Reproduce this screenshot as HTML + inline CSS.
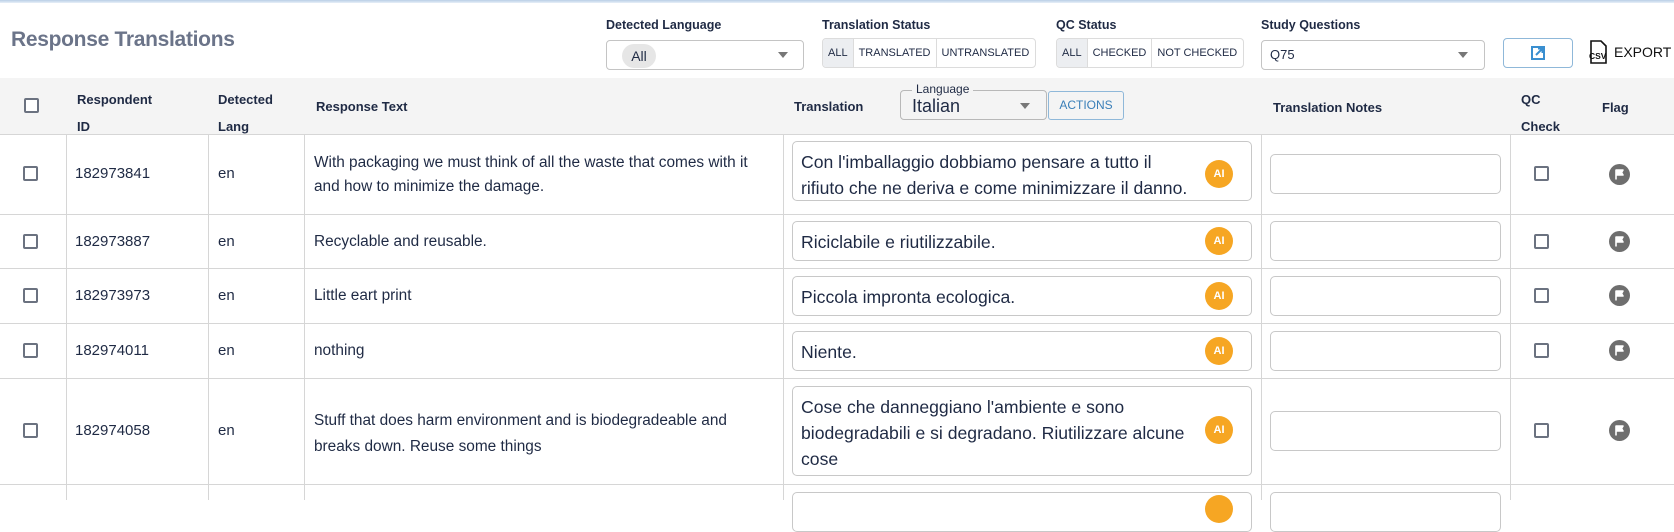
<!DOCTYPE html>
<html><head><meta charset="utf-8"><style>
*{box-sizing:border-box;margin:0;padding:0}
body{width:1674px;height:500px;overflow:hidden;background:#fff;font-family:"Liberation Sans",sans-serif;color:#1f2a44;position:relative}
.a{position:absolute}
.top{left:0;top:0;width:1674px;height:3px;background:linear-gradient(#b9cfe6,#e8f0f8)}
.title{left:11px;top:28px;font-size:21px;font-weight:bold;color:#6b7489;letter-spacing:-0.3px}
.lbl{font-size:12.5px;font-weight:bold;color:#1f2a44}
.sel{border:1px solid #c4c4c4;border-radius:4px;background:#fff}
.arrow{width:0;height:0;border-left:5px solid transparent;border-right:5px solid transparent;border-top:6px solid #777}
.seg{display:flex;border:1px solid #dcdcdc;border-radius:4px;height:30px;font-size:11px;overflow:hidden}
.seg div{padding:0 5px;line-height:28px;border-right:1px solid #dcdcdc;color:#1f2a44}
.seg div:last-child{border-right:none}
.seg .on{background:#eceef1}
.hdr{left:0;top:78px;width:1674px;height:56px;background:#f4f4f4}
.h{font-size:13px;font-weight:bold;color:#1f2a44}
.vl{width:1px;background:#d6d6d6}
.hl{height:1px;background:#d6d6d6;left:0;width:1674px}
.cb{width:15px;height:15px;border:2px solid #6b7280;border-radius:2px;background:#fff}
.t{font-size:15px;color:#1f2a44}
.tb{border:1px solid #c8c8c8;border-radius:5px;left:792px;width:460px;font-size:17.6px;line-height:26px;padding:7px 8px 0;color:#1f2a44}
.ai{width:28px;height:28px;border-radius:50%;background:#f6a623;color:#fff;font-size:11px;font-weight:bold;text-align:center;line-height:28px;left:1205px}
.ni{border:1px solid #c8c8c8;border-radius:5px;left:1270px;width:231px;height:40px}
.fl{width:21px;height:21px;left:1609px}
</style></head><body>
<div class="a top"></div>
<div class="a title">Response Translations</div>

<div class="a lbl" style="left:606px;top:18px">Detected Language</div>
<div class="a sel" style="left:606px;top:40px;width:198px;height:30px"></div>
<div class="a" style="left:622px;top:44px;width:34px;height:24px;border-radius:12px;background:#e6e6e6;font-size:14px;line-height:24px;text-align:center">All</div>
<div class="a arrow" style="left:778px;top:52px"></div>

<div class="a lbl" style="left:822px;top:18px">Translation Status</div>
<div class="a seg" style="left:822px;top:38px;width:214px"><div class="on">ALL</div><div>TRANSLATED</div><div>UNTRANSLATED</div></div>

<div class="a lbl" style="left:1056px;top:18px">QC Status</div>
<div class="a seg" style="left:1056px;top:38px;width:188px"><div class="on">ALL</div><div>CHECKED</div><div>NOT CHECKED</div></div>

<div class="a lbl" style="left:1261px;top:18px">Study Questions</div>
<div class="a sel" style="left:1261px;top:40px;width:224px;height:30px;font-size:13px;line-height:28px;padding-left:8px">Q75</div>
<div class="a arrow" style="left:1458px;top:52px"></div>

<div class="a" style="left:1503px;top:38px;width:70px;height:30px;border:1px solid #8fb8d9;border-radius:4px"></div>
<svg class="a" style="left:1530px;top:45px" width="16" height="16" viewBox="0 0 16 16"><rect x="2" y="2" width="12" height="12" fill="none" stroke="#3a8fd0" stroke-width="2"/><path d="M6 10L12 4M8 3.5h4.5v4.5" stroke="#3a8fd0" stroke-width="2" fill="none"/></svg>
<svg class="a" style="left:1588px;top:40px" width="20" height="24" viewBox="0 0 20 24"><path d="M3 1h10l5 5v17H3z" fill="#fff" stroke="#111" stroke-width="1.6"/><text x="1" y="19" font-size="8.5" font-weight="bold" font-family="Liberation Sans" fill="#111">CSV</text></svg>
<div class="a" style="left:1614px;top:44px;font-size:14px;color:#111">EXPORT</div>

<div class="a hdr"></div>
<div class="a cb" style="left:24px;top:98px"></div>
<div class="a h" style="left:77px;top:86px;line-height:27px">Respondent<br>ID</div>
<div class="a h" style="left:218px;top:86px;line-height:27px">Detected<br>Lang</div>
<div class="a h" style="left:316px;top:99px">Response Text</div>
<div class="a h" style="left:794px;top:99px">Translation</div>
<div class="a" style="left:900px;top:90px;width:147px;height:30px;border:1px solid #b8b8b8;border-radius:4px"></div>
<div class="a" style="left:912px;top:82px;background:#f4f4f4;padding:0 4px;font-size:12px;color:#1f2a44">Language</div>
<div class="a" style="left:912px;top:96px;font-size:18px;color:#1f2a44">Italian</div>
<div class="a arrow" style="left:1020px;top:103px"></div>
<div class="a" style="left:1048px;top:91px;width:76px;height:29px;border:1px solid #8fb8d9;border-radius:3px;font-size:12px;color:#3a7fb8;text-align:center;line-height:27px">ACTIONS</div>
<div class="a h" style="left:1273px;top:100px">Translation Notes</div>
<div class="a h" style="left:1521px;top:86px;line-height:27px">QC<br>Check</div>
<div class="a h" style="left:1602px;top:100px">Flag</div>

<div class="a hl" style="top:134px"></div>
<div class="a hl" style="top:214px"></div>
<div class="a hl" style="top:268px"></div>
<div class="a hl" style="top:323px"></div>
<div class="a hl" style="top:378px"></div>
<div class="a hl" style="top:484px"></div>
<div class="a vl" style="left:66px;top:134px;height:366px"></div>
<div class="a vl" style="left:208px;top:134px;height:366px"></div>
<div class="a vl" style="left:304px;top:134px;height:366px"></div>
<div class="a vl" style="left:783px;top:134px;height:366px"></div>
<div class="a vl" style="left:1261px;top:134px;height:366px"></div>
<div class="a vl" style="left:1510px;top:134px;height:366px"></div>

<svg width="0" height="0" style="position:absolute"><defs><symbol id="f" viewBox="0 0 21 21"><circle cx="10.5" cy="10.5" r="10.5" fill="#6e6e6e"/><path d="M7 5.5v10M7 6h7l-1.5 2.5L14 11H7" fill="#fff" stroke="#fff" stroke-width="1.6" stroke-linejoin="round"/></symbol></defs></svg>

<!-- row1 -->
<div class="a cb" style="left:23px;top:166px"></div>
<div class="a t" style="left:75px;top:165px">182973841</div>
<div class="a t" style="left:218px;top:165px">en</div>
<div class="a t" style="left:314px;top:151px;line-height:24px;font-size:15.4px">With packaging we must think of all the waste that comes with it<br>and how to minimize the damage.</div>
<div class="a tb" style="top:141px;height:60px">Con l'imballaggio dobbiamo pensare a tutto il<br>rifiuto che ne deriva e come minimizzare il danno.</div>
<div class="a ai" style="top:160px">AI</div>
<div class="a ni" style="top:154px"></div>
<div class="a cb" style="left:1534px;top:166px"></div>
<svg class="a fl" style="top:164px"><use href="#f"/></svg>

<!-- row2 -->
<div class="a cb" style="left:23px;top:234px"></div>
<div class="a t" style="left:75px;top:233px">182973887</div>
<div class="a t" style="left:218px;top:233px">en</div>
<div class="a t" style="left:314px;top:233px;font-size:15.4px">Recyclable and reusable.</div>
<div class="a tb" style="top:221px;height:40px">Riciclabile e riutilizzabile.</div>
<div class="a ai" style="top:227px">AI</div>
<div class="a ni" style="top:221px"></div>
<div class="a cb" style="left:1534px;top:234px"></div>
<svg class="a fl" style="top:231px"><use href="#f"/></svg>

<!-- row3 -->
<div class="a cb" style="left:23px;top:288px"></div>
<div class="a t" style="left:75px;top:287px">182973973</div>
<div class="a t" style="left:218px;top:287px">en</div>
<div class="a t" style="left:314px;top:287px;font-size:15.4px">Little eart print</div>
<div class="a tb" style="top:276px;height:40px">Piccola impronta ecologica.</div>
<div class="a ai" style="top:282px">AI</div>
<div class="a ni" style="top:276px"></div>
<div class="a cb" style="left:1534px;top:288px"></div>
<svg class="a fl" style="top:285px"><use href="#f"/></svg>

<!-- row4 -->
<div class="a cb" style="left:23px;top:343px"></div>
<div class="a t" style="left:75px;top:342px">182974011</div>
<div class="a t" style="left:218px;top:342px">en</div>
<div class="a t" style="left:314px;top:342px;font-size:15.4px">nothing</div>
<div class="a tb" style="top:331px;height:40px">Niente.</div>
<div class="a ai" style="top:337px">AI</div>
<div class="a ni" style="top:331px"></div>
<div class="a cb" style="left:1534px;top:343px"></div>
<svg class="a fl" style="top:340px"><use href="#f"/></svg>

<!-- row5 -->
<div class="a cb" style="left:23px;top:423px"></div>
<div class="a t" style="left:75px;top:422px">182974058</div>
<div class="a t" style="left:218px;top:422px">en</div>
<div class="a t" style="left:314px;top:408px;line-height:26px;font-size:15.4px">Stuff that does harm environment and is biodegradeable and<br>breaks down. Reuse some things</div>
<div class="a tb" style="top:386px;height:90px">Cose che danneggiano l'ambiente e sono<br>biodegradabili e si degradano. Riutilizzare alcune<br>cose</div>
<div class="a ai" style="top:416px">AI</div>
<div class="a ni" style="top:411px"></div>
<div class="a cb" style="left:1534px;top:423px"></div>
<svg class="a fl" style="top:420px"><use href="#f"/></svg>

<!-- row6 partial -->
<div class="a tb" style="top:492px;height:40px"></div>
<div class="a ai" style="top:495px"></div>
<div class="a ni" style="top:492px"></div>
</body></html>
